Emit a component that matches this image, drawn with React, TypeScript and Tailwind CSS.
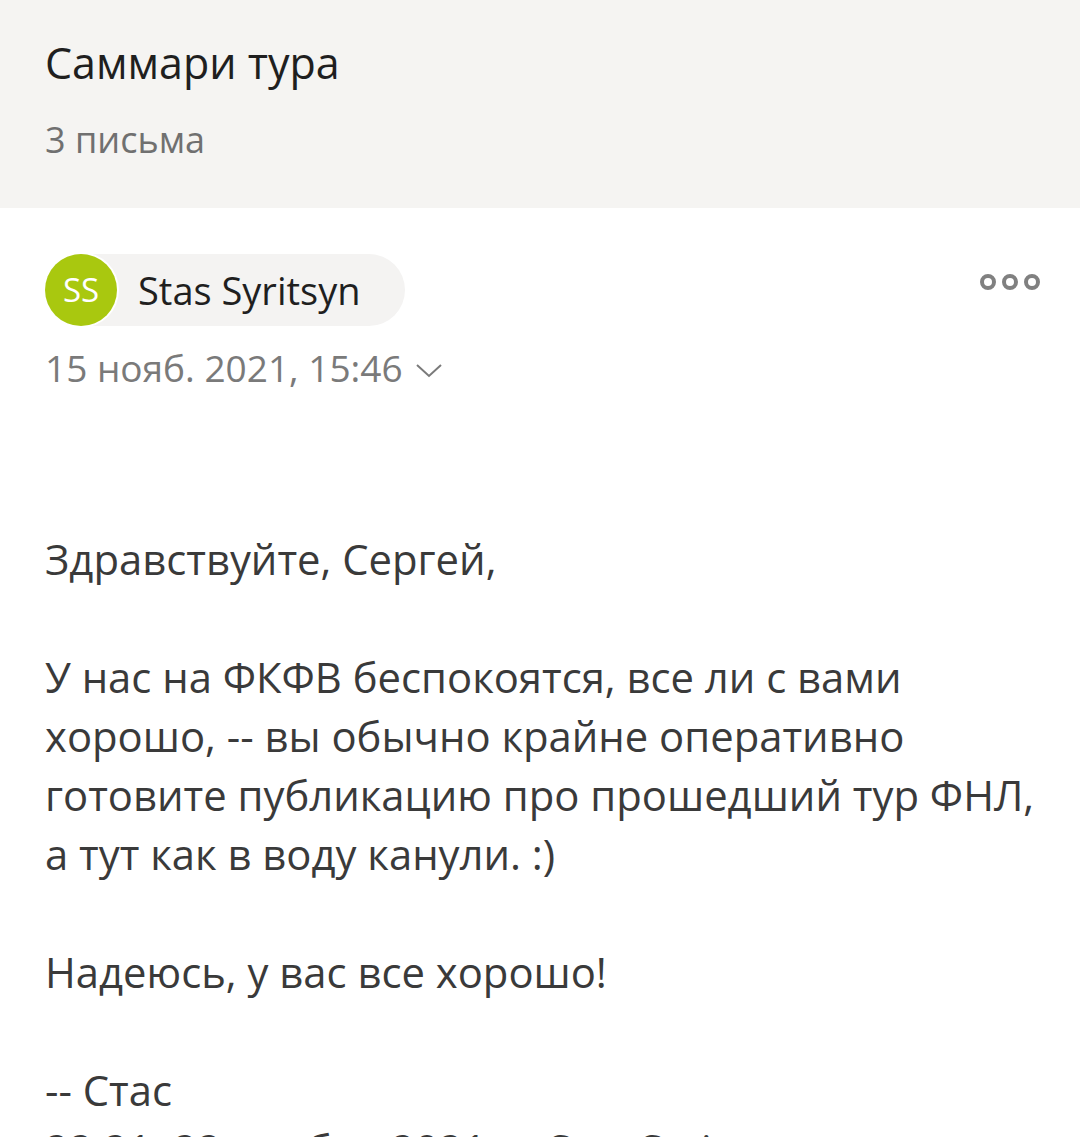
const font = { fontFamily: '"Open Sans", "Noto Sans", sans-serif' };

const body = `Здравствуйте, Сергей,

У нас на ФКФВ беспокоятся, все ли с вами
хорошо, -- вы обычно крайне оперативно
готовите публикацию про прошедший тур ФНЛ,
а тут как в воду канули. :)

Надеюсь, у вас все хорошо!

-- Стас
22:21, 22 ноября 2021 г., Stas Syritsyn`;

function DotsIcon() {
  return (
    <svg width="62" height="20" viewBox="0 0 62 20" fill="none" stroke="#808080" strokeWidth="4">
      <circle cx="9" cy="10" r="6" />
      <circle cx="31" cy="10" r="6" />
      <circle cx="53" cy="10" r="6" />
    </svg>
  );
}

export default function App() {
  return (
    <div className="h-[1137px] overflow-hidden bg-white" style={font}>
      <header className="h-[208px] bg-[#f5f4f2] px-[45px] pt-[36px]">
        <h1 className="text-[43px] leading-[54px] text-[#1f1f1f]">Саммари тура</h1>
        <p className="mt-[26px] text-[36px] leading-[48px] text-[#707070]">3 письма</p>
      </header>

      <section className="px-[45px] pt-[46px]">
        <div className="flex items-start justify-between">
          <div className="flex h-[72px] items-center rounded-full bg-[#f4f3f2] pr-[45px]">
            <div className="flex h-[72px] w-[72px] items-center justify-center rounded-full bg-[#a9c80f] ring-2 ring-white">
              <span className="text-[33px] text-white">SS</span>
            </div>
            <span className="ml-[21px] text-[38px] text-[#1f1f1f]">Stas Syritsyn</span>
          </div>
          <div className="mt-[18px] mr-[-6px]">
            <DotsIcon />
          </div>
        </div>

        <div className="mt-[20px] flex items-center text-[#7a7a7a]">
          <span className="text-[37px] leading-[44px]">15 нояб. 2021, 15:46</span>
          <svg className="ml-[12px] mt-[4px]" width="28" height="16" viewBox="0 0 28 16" fill="none" stroke="#7a7a7a" strokeWidth="2">
            <path d="M2 3l12 11 12-11" />
          </svg>
        </div>

        <div className="mt-[139px] whitespace-pre text-[41.8px] leading-[59px] text-[#3a3a3a]">
          {body}
        </div>
      </section>
    </div>
  );
}
